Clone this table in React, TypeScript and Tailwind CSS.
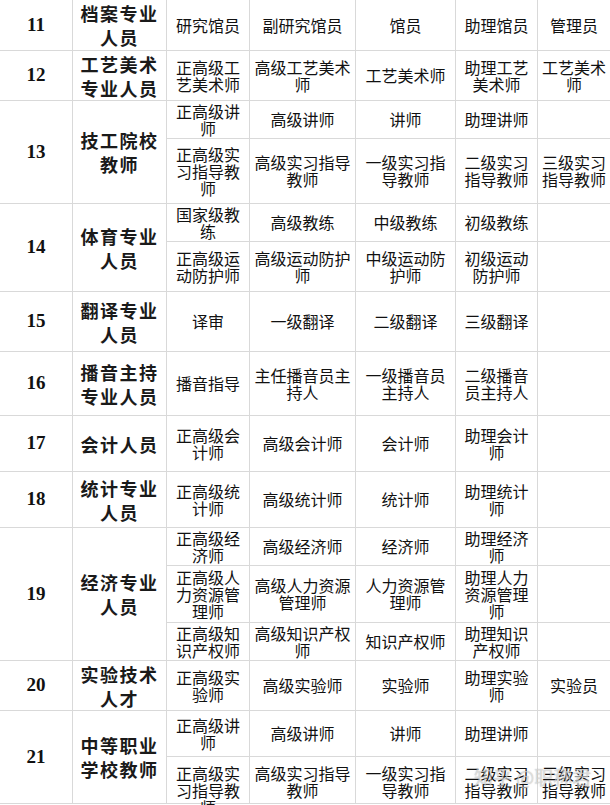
import React from "react";

type Group = {
  no: string;
  name: string;
  rows: string[][];
};

// "/" marks a line break inside a cell
const groups: Group[] = [
  { no: "11", name: "档案专业/人员", rows: [["研究馆员", "副研究馆员", "馆员", "助理馆员", "管理员"]] },
  {
    no: "12",
    name: "工艺美术/专业人员",
    rows: [["正高级工/艺美术师", "高级工艺美术/师", "工艺美术师", "助理工艺/美术师", "工艺美术/师"]],
  },
  {
    no: "13",
    name: "技工院校/教师",
    rows: [
      ["正高级讲/师", "高级讲师", "讲师", "助理讲师", ""],
      ["正高级实/习指导教/师", "高级实习指导/教师", "一级实习指/导教师", "二级实习/指导教师", "三级实习/指导教师"],
    ],
  },
  {
    no: "14",
    name: "体育专业/人员",
    rows: [
      ["国家级教/练", "高级教练", "中级教练", "初级教练", ""],
      ["正高级运/动防护师", "高级运动防护/师", "中级运动防/护师", "初级运动/防护师", ""],
    ],
  },
  { no: "15", name: "翻译专业/人员", rows: [["译审", "一级翻译", "二级翻译", "三级翻译", ""]] },
  {
    no: "16",
    name: "播音主持/专业人员",
    rows: [["播音指导", "主任播音员主/持人", "一级播音员/主持人", "二级播音/员主持人", ""]],
  },
  { no: "17", name: "会计人员", rows: [["正高级会/计师", "高级会计师", "会计师", "助理会计/师", ""]] },
  { no: "18", name: "统计专业/人员", rows: [["正高级统/计师", "高级统计师", "统计师", "助理统计/师", ""]] },
  {
    no: "19",
    name: "经济专业/人员",
    rows: [
      ["正高级经/济师", "高级经济师", "经济师", "助理经济/师", ""],
      ["正高级人/力资源管/理师", "高级人力资源/管理师", "人力资源管/理师", "助理人力/资源管理/师", ""],
      ["正高级知/识产权师", "高级知识产权/师", "知识产权师", "助理知识/产权师", ""],
    ],
  },
  { no: "20", name: "实验技术/人才", rows: [["正高级实/验师", "高级实验师", "实验师", "助理实验/师", "实验员"]] },
  {
    no: "21",
    name: "中等职业/学校教师",
    rows: [
      ["正高级讲/师", "高级讲师", "讲师", "助理讲师", ""],
      ["正高级实/习指导教/师", "高级实习指导/教师", "一级实习指/导教师", "二级实习/指导教师", "三级实习/指导教师"],
    ],
  },
];

const spanClass: Record<number, string> = {
  1: "row-span-1",
  2: "row-span-2",
  3: "row-span-3",
};

const Lines = ({ text }: { text: string }) => (
  <>
    {text.split("/").map((l, i) => (
      <span key={i} className="block whitespace-nowrap">
        {l}
      </span>
    ))}
  </>
);

const App = () => {
  return (
    <div className="relative w-[610px] h-[805px] overflow-hidden bg-white">
      <div className="grid grid-cols-[72px_93px_82px_105px_99px_81px_1fr] grid-rows-[50px_49px_37px_64px_37px_49px_59px_63px_55px_55px_37px_56px_37px_49px_45px_46px] gap-px pb-px bg-[#d9d9d9]">
        {groups.map((g, gi) => (
          <React.Fragment key={g.no}>
            <div
              className={`${spanClass[g.rows.length]} bg-white flex items-center justify-center font-['Liberation_Serif',serif] font-bold text-[19px] text-[#111]`}
            >
              {g.no}
            </div>
            <div
              className={`${spanClass[g.rows.length]} bg-white flex flex-col items-center justify-center text-center font-['Noto_Sans_CJK_SC',sans-serif] font-bold text-[18px] leading-[24px] tracking-[1.5px] text-[#1a1a1a]`}
            >
              <Lines text={g.name} />
            </div>
            {g.rows.map((r, ri) =>
              r.map((c, ci) => {
                const lastRow = gi === groups.length - 1 && ri === g.rows.length - 1;
                return (
                  <div
                    key={`${ri}-${ci}`}
                    className={`bg-white flex flex-col items-center text-center font-['Noto_Sans_CJK_SC',sans-serif] text-[16px] leading-[17px] text-[#111] ${
                      lastRow ? "justify-start pt-[8px]" : "justify-center"
                    }`}
                  >
                    {c && <Lines text={c} />}
                  </div>
                );
              })
            )}
          </React.Fragment>
        ))}
      </div>
      <div className="absolute left-[474px] top-[763px] font-['Noto_Sans_CJK_SC',sans-serif] text-[19px] text-white/50 [text-shadow:0_0_1px_rgba(90,90,90,0.5)] whitespace-nowrap pointer-events-none">
        知乎 @职称君
      </div>
    </div>
  );
};

export default App;
